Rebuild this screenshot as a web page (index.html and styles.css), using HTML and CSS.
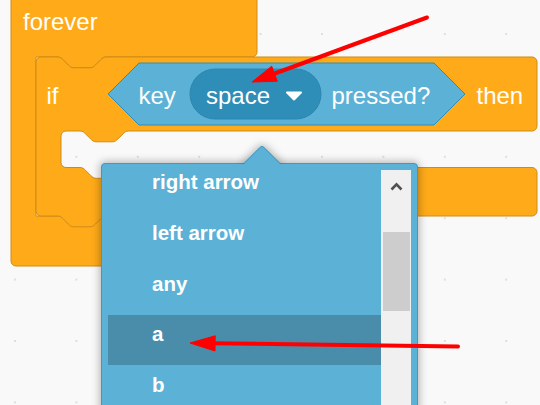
FILE: index.html
```html
<!DOCTYPE html>
<html lang="en">
<head>
<meta charset="utf-8">
<title>Scratch key pressed dropdown</title>
<link rel="stylesheet" href="styles.css">
</head>
<body>
<div class="workspace">
  <svg class="canvas" width="540" height="405" viewBox="0 0 540 405" xmlns="http://www.w3.org/2000/svg">
    <defs>
      <pattern id="grid" x="14" y="33" width="61.4" height="61.4" patternUnits="userSpaceOnUse">
        <circle cx="1" cy="1" r="1" class="grid-dot"/>
      </pattern>
    </defs>
    <rect x="0" y="0" width="540" height="405" fill="url(#grid)"/>

    <!-- forever block -->
    <path class="block-control" d="M 11,-10 H 257 V 52 a5,5 0 0 1 -5,5 H 106.2
      c -2.7,0 -4.05,1.35 -5.4,2.7 l -5.4,5.4 c -1.35,1.35 -2.7,2.7 -5.4,2.7 h -16.2 c -2.7,0 -4.05,-1.35 -5.4,-2.7 l -5.4,-5.4 c -1.35,-1.35 -2.7,-2.7 -5.4,-2.7
      H 36 V 216 H 257 V 261 a5,5 0 0 1 -5,5 H 16 a5,5 0 0 1 -5,-5 Z"/>
    <text class="label" x="23" y="30">forever</text>

    <!-- if block -->
    <path class="block-control" d="M 36,62 a5,5 0 0 1 5,-5 H 57.6
      c 2.7,0 4.05,1.35 5.4,2.7 l 5.4,5.4 c 1.35,1.35 2.7,2.7 5.4,2.7 h 16.2 c 2.7,0 4.05,-1.35 5.4,-2.7 l 5.4,-5.4 c 1.35,-1.35 2.7,-2.7 5.4,-2.7
      H 532 a5,5 0 0 1 5,5 V 126 a5,5 0 0 1 -5,5 H 128.6
      c -2.7,0 -4.05,1.35 -5.4,2.7 l -5.4,5.4 c -1.35,1.35 -2.7,2.7 -5.4,2.7 h -16.2 c -2.7,0 -4.05,-1.35 -5.4,-2.7 l -5.4,-5.4 c -1.35,-1.35 -2.7,-2.7 -5.4,-2.7
      H 66 a5,5 0 0 0 -5,5 V 162.5 a5,5 0 0 0 5,5 H 80
      c 2.7,0 4.05,1.35 5.4,2.7 l 5.4,5.4 c 1.35,1.35 2.7,2.7 5.4,2.7 h 16.2 c 2.7,0 4.05,-1.35 5.4,-2.7 l 5.4,-5.4 c 1.35,-1.35 2.7,-2.7 5.4,-2.7
      H 532 a5,5 0 0 1 5,5 V 211 a5,5 0 0 1 -5,5 H 106.2
      c -2.7,0 -4.05,1.35 -5.4,2.7 l -5.4,5.4 c -1.35,1.35 -2.7,2.7 -5.4,2.7 h -16.2 c -2.7,0 -4.05,-1.35 -5.4,-2.7 l -5.4,-5.4 c -1.35,-1.35 -2.7,-2.7 -5.4,-2.7
      H 41 a5,5 0 0 1 -5,-5 Z"/>
    <text class="label" x="46.5" y="104">if</text>

    <!-- key pressed? boolean -->
    <path class="block-sensing" d="M 108,94 L 139,63 H 434 L 465,94 L 434,125 H 139 Z"/>
    <text class="label" x="138.5" y="104">key</text>
    <rect class="field" x="190" y="69" width="131" height="50" rx="25" ry="25"/>
    <text class="label" x="206" y="104">space</text>
    <path class="field-arrow" d="M 287,92.5 L 301,92.5 L 294,99.5 Z"/>
    <text class="label" x="331.5" y="104">pressed?</text>
    <text class="label" x="476.5" y="104">then</text>
  </svg>

  <div class="dropdown">
    <div class="pointer"></div>
    <div class="viewport">
      <ul class="menu">
        <li class="menu-item">right arrow</li>
        <li class="menu-item">left arrow</li>
        <li class="menu-item">any</li>
        <li class="menu-item is-active">a</li>
        <li class="menu-item">b</li>
        <li class="menu-item">c</li>
      </ul>
      <div class="scrollbar">
        <div class="scroll-up">
          <svg width="30" height="30" viewBox="0 0 30 30" xmlns="http://www.w3.org/2000/svg">
            <path class="chevron" d="M 10.5,19.5 L 15.5,14.3 L 20.5,19.5"/>
          </svg>
        </div>
        <div class="scroll-thumb"></div>
      </div>
    </div>
  </div>

  <svg class="annotations" width="540" height="405" viewBox="0 0 540 405" xmlns="http://www.w3.org/2000/svg">
    <line class="arrow-line" x1="272" y1="74.5" x2="427" y2="17.5"/>
    <polygon class="arrow-head" points="252,82 277.3,81.2 271.7,66.2"/>
    <line class="arrow-line" x1="212" y1="343.3" x2="458" y2="346.5"/>
    <polygon class="arrow-head" points="190,343 215,351 215.2,335.8"/>
  </svg>
</div>
</body>
</html>
```

FILE: styles.css
```css
html, body {
  margin: 0;
  padding: 0;
}

body {
  width: 540px;
  height: 405px;
  overflow: hidden;
  background: #f9f9f9;
  font-family: "Liberation Sans", Arial, Helvetica, sans-serif;
}

.workspace {
  position: relative;
  width: 540px;
  height: 405px;
  overflow: hidden;
  background: #f9f9f9;
}

.canvas {
  display: block;
}

.grid-dot {
  fill: #d6d6d6;
}

.block-control {
  fill: #ffab19;
  stroke: #cf8b17;
  stroke-width: 1;
}

.block-sensing {
  fill: #5cb1d6;
  stroke: #2e8eb8;
  stroke-width: 1;
}

.field {
  fill: #2e8eb8;
  stroke: #2b87b0;
  stroke-width: 1;
}

.field-arrow {
  fill: #ffffff;
  stroke: #ffffff;
  stroke-width: 2;
  stroke-linejoin: round;
}

.label {
  fill: #ffffff;
  font-family: "Liberation Sans", Arial, Helvetica, sans-serif;
  font-size: 24px;
}

/* dropdown menu */
.dropdown {
  position: absolute;
  left: 101px;
  top: 163px;
  width: 317px;
  height: 260px;
  box-sizing: border-box;
  padding: 6px;
  background: #5cb1d6;
  border: 1px solid #3c9ac5;
  border-radius: 4px;
  box-shadow: 0 0 8px 1px rgba(0, 0, 0, 0.3);
}

.pointer {
  position: absolute;
  left: 146.5px;
  top: -14px;
  width: 26px;
  height: 26px;
  box-sizing: border-box;
  background: #5cb1d6;
  border-top: 1px solid #3c9ac5;
  border-left: 1px solid #3c9ac5;
  border-top-left-radius: 4px;
  transform: rotate(45deg);
  box-shadow: 0 0 8px 1px rgba(0, 0, 0, 0.3);
  clip-path: polygon(-14px -14px, 41.5px -14px, -14px 41.5px);
}

.viewport {
  display: flex;
  height: 100%;
  overflow: hidden;
}

.menu {
  flex: 1;
  margin: -7.8px 0 0 0;
  padding: 0;
  list-style: none;
}

.menu-item {
  box-sizing: border-box;
  height: 50.8px;
  padding: 8.9px 0 0 44px;
  line-height: 22px;
  font-size: 20.5px;
  font-weight: bold;
  color: #ffffff;
  white-space: nowrap;
}

.menu-item.is-active {
  background: rgba(0, 0, 0, 0.2);
}

.scrollbar {
  width: 30px;
  flex: none;
  display: flex;
  flex-direction: column;
  background: #f0f0f0;
}

.scroll-up {
  height: 30px;
  flex: none;
}

.scroll-up svg {
  display: block;
}

.chevron {
  fill: none;
  stroke: #505050;
  stroke-width: 2.6;
  stroke-linecap: butt;
  stroke-linejoin: miter;
}

.scroll-thumb {
  margin: 32px 1px 0 1.5px;
  height: 79px;
  background: #cdcdcd;
}

/* red annotation arrows */
.annotations {
  position: absolute;
  left: 0;
  top: 0;
  pointer-events: none;
}

.arrow-line {
  stroke: #ff0000;
  stroke-width: 4;
  stroke-linecap: round;
}

.arrow-head {
  fill: #ff0000;
  stroke: #ff0000;
  stroke-width: 1;
  stroke-linejoin: round;
}
```
